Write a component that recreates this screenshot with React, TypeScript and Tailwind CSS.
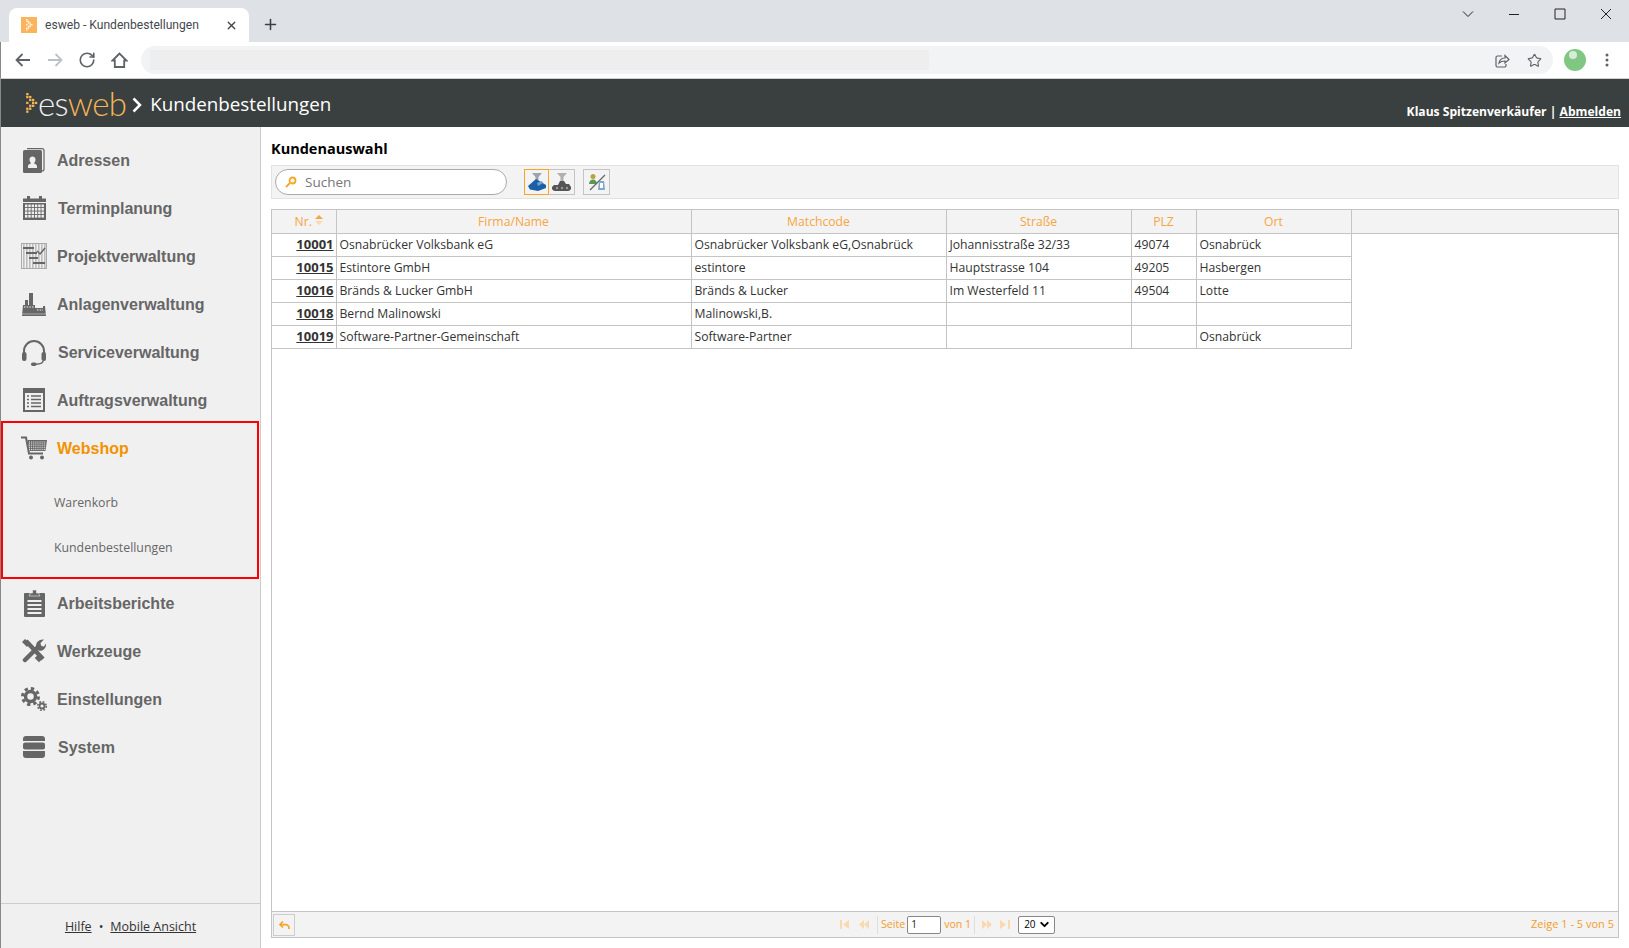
import { RotateCw, Star, X, Plus, ChevronDown } from "lucide-react";
import type { ReactNode } from "react";

const G = "#666666";

function AdressenIcon() {
  return (
    <svg width="22" height="25" viewBox="0 0 22 25">
      <path d="M4 .7H19a2 2 0 0 1 2 2V21a2 2 0 0 1-2 2" fill="none" stroke={G} strokeWidth="1.2" />
      <rect x="0" y="2" width="19" height="23" rx="1.5" fill={G} />
      <path d="M5 20v-2c0-1.5 2.5-2 3-3-1-1-1.5-2-1.5-3.5C6.5 9.5 8 8.5 9.5 8.5s3 1 3 3c0 1.5-.5 2.5-1.5 3.5.5 1 3 1.5 3 3v2z" fill="#f0f0f0" />
    </svg>
  );
}

function CalendarIcon() {
  const cells = [];
  for (let r = 0; r < 4; r++) for (let c = 0; c < 6; c++) cells.push(<rect key={r + "-" + c} x={2 + c * 3.3} y={8.5 + r * 3.5} width="2.4" height="2.6" fill="#f0f0f0" />);
  return (
    <svg width="23" height="24" viewBox="0 0 23 24">
      <rect x="0" y="2.5" width="23" height="21.5" fill={G} />
      <rect x="4" y="0" width="3" height="4" fill={G} />
      <rect x="16" y="0" width="3" height="4" fill={G} />
      <rect x="0" y="6" width="23" height="1" fill="#f0f0f0" />
      {cells}
    </svg>
  );
}

function ProjektIcon() {
  const stripes = [];
  for (let i = 0; i < 8; i++) stripes.push(<rect key={i} x={2 + i * 3} y="1" width="1.6" height="24" fill="#bdbdbd" />);
  return (
    <svg width="26" height="26" viewBox="0 0 26 26">
      <rect x=".5" y=".5" width="25" height="25" fill="#f0f0f0" stroke="#aaaaaa" />
      {stripes}
      <rect x="2" y="4" width="11" height="2" fill={G} />
      <rect x="5" y="9" width="11" height="2" fill={G} />
      <rect x="8" y="14" width="9" height="2" fill={G} />
      <rect x="12" y="19" width="12" height="2" fill={G} />
      <path d="M16 8l3 3 5-6" fill="none" stroke={G} strokeWidth="1.5" />
    </svg>
  );
}

function AnlagenIcon() {
  return (
    <svg width="24" height="23" viewBox="0 0 24 23">
      <path d="M0 23l1-11h2V7h3v5h1V0h4v12h2v3h8v-2h2l1 10z" fill={G} />
      <path d="M2 14h10M15 17h6" stroke="#f0f0f0" strokeWidth="1" strokeDasharray="1.5 1.2" />
      <rect x="0" y="20.5" width="24" height="1" fill="#f0f0f0" opacity=".5" />
    </svg>
  );
}

function HeadsetIcon() {
  return (
    <svg width="24" height="27" viewBox="0 0 24 27">
      <path d="M2 16V12a10 10 0 0 1 20 0v4" fill="none" stroke={G} strokeWidth="2" />
      <rect x="0" y="13" width="4.5" height="9" rx="2" fill={G} />
      <rect x="19.5" y="13" width="4.5" height="9" rx="2" fill={G} />
      <path d="M21 22c0 2.5-3 3-7 3.2" fill="none" stroke={G} strokeWidth="1.5" />
      <rect x="9" y="23.5" width="5.5" height="3.5" rx="1.7" fill={G} />
    </svg>
  );
}

function AuftragIcon() {
  return (
    <svg width="22" height="24" viewBox="0 0 22 24">
      <rect x="0" y="0" width="22" height="24" fill={G} />
      <rect x="2" y="5" width="18" height="17" fill="#f0f0f0" />
      <path d="M4 8h2M8 8h10M4 11.5h2M8 11.5h10M4 15h2M8 15h10M4 18.5h2M8 18.5h10" stroke={G} strokeWidth="1.6" />
    </svg>
  );
}

function CartIcon() {
  const grid = [];
  for (let r = 0; r < 5; r++) for (let c = 0; c < 9; c++) grid.push(<rect key={r + "-" + c} x={8 + c * 1.9} y={5.5 + r * 1.9} width="1" height="1" fill="#f0f0f0" />);
  return (
    <svg width="26" height="24" viewBox="0 0 26 24">
      <path d="M0 1.5h5l3 16h14" fill="none" stroke={G} strokeWidth="2" />
      <path d="M6.5 4H26l-1.5 11H8.5z" fill={G} />
      {grid}
      <circle cx="10" cy="21.5" r="2" fill={G} />
      <circle cx="21" cy="21.5" r="2" fill={G} />
    </svg>
  );
}

function ClipboardIcon() {
  return (
    <svg width="21" height="27" viewBox="0 0 21 27">
      <rect x="0" y="3" width="21" height="24" rx="1" fill={G} />
      <path d="M6 4V3h2.5V0h4v3H15v1.5l1 1.5H5z" fill={G} stroke="#f0f0f0" strokeWidth=".6" />
      <path d="M3.5 11h14M3.5 15h14M3.5 19h14M3.5 23h14" stroke="#f0f0f0" strokeWidth="1.8" />
    </svg>
  );
}

function ToolsIcon() {
  return (
    <svg width="24" height="25" viewBox="0 0 24 25">
      <path d="M4 2l17 18" stroke={G} strokeWidth="4.5" />
      <path d="M0 3l3-3 5 4-3 4z" fill={G} />
      <path d="M3 21L17 7" stroke={G} strokeWidth="4.5" strokeLinecap="round" />
      <path d="M14 8c-.5-4 2.5-8 8-7.5l-3.5 3.5.5 3 3 .5L24 4.5c.5 5-3.5 8-7.5 7z" fill={G} />
      <rect x="14" y="16" width="6" height="6" transform="rotate(45 17 19)" fill={G} />
    </svg>
  );
}

function GearsIcon() {
  return (
    <svg width="26" height="24" viewBox="0 0 26 24">
      <circle cx="9.5" cy="9.5" r="5" fill="none" stroke={G} strokeWidth="3.5" />
      <circle cx="9.5" cy="9.5" r="8" fill="none" stroke={G} strokeWidth="3" strokeDasharray="3.3 3" />
      <circle cx="21" cy="19" r="2.5" fill="none" stroke={G} strokeWidth="1.8" />
      <circle cx="21" cy="19" r="4.3" fill="none" stroke={G} strokeWidth="1.5" strokeDasharray="1.8 1.6" />
    </svg>
  );
}

function SystemIcon() {
  return (
    <svg width="22" height="22" viewBox="0 0 22 22">
      <path d="M3 0h16a3 3 0 0 1 3 3v2H0V3a3 3 0 0 1 3-3z" fill={G} />
      <rect x="0" y="6.5" width="22" height="7" rx="2" fill={G} />
      <path d="M0 15h22v4a3 3 0 0 1-3 3H3a3 3 0 0 1-3-3z" fill={G} />
    </svg>
  );
}

function DotsLogo({ color, size }: { color: string; size: number }) {
  const cells = [[0, 0], [3, 3], [0, 3], [6, 6], [3, 6], [9, 9], [6, 9], [0, 9], [6, 12], [3, 12], [3, 15], [0, 15], [0, 18]];
  return (
    <svg width={size} height={size * 1.7} viewBox="0 0 12 21">
      {cells.map(([x, y], i) => <rect key={i} x={x} y={y} width="2.4" height="2.4" fill={color} />)}
    </svg>
  );
}

const navTop = [
  { label: "Adressen", icon: <AdressenIcon />, text: "ml-[9px]" },
  { label: "Terminplanung", icon: <CalendarIcon />, text: "ml-[10px]" },
  { label: "Projektverwaltung", icon: <ProjektIcon />, text: "ml-[9px]" },
  { label: "Anlagenverwaltung", icon: <AnlagenIcon />, text: "ml-[9px]" },
  { label: "Serviceverwaltung", icon: <HeadsetIcon />, text: "ml-[10px]" },
  { label: "Auftragsverwaltung", icon: <AuftragIcon />, text: "ml-[9px]" },
];

const navBottom = [
  { label: "Arbeitsberichte", icon: <ClipboardIcon />, text: "ml-[9px]" },
  { label: "Werkzeuge", icon: <ToolsIcon />, text: "ml-[9px]" },
  { label: "Einstellungen", icon: <GearsIcon />, text: "ml-[9px]" },
  { label: "System", icon: <SystemIcon />, text: "ml-[10px]" },
];

function NavItem({ label, icon, text }: { label: string; icon: ReactNode; text: string }) {
  return (
    <div className="flex h-[48px] items-center pl-[19px]">
      <div className="flex w-[28px] justify-center">{icon}</div>
      <span className={text + " pt-[2px] font-['Liberation_Sans',sans-serif] text-[16px] font-bold text-[#666666]"}>{label}</span>
    </div>
  );
}

const rows = [
  ["10001", "Osnabrücker Volksbank eG", "Osnabrücker Volksbank eG,Osnabrück", "Johannisstraße 32/33", "49074", "Osnabrück"],
  ["10015", "Estintore GmbH", "estintore", "Hauptstrasse 104", "49205", "Hasbergen"],
  ["10016", "Bränds & Lucker GmbH", "Bränds & Lucker", "Im Westerfeld 11", "49504", "Lotte"],
  ["10018", "Bernd Malinowski", "Malinowski,B.", "", "", ""],
  ["10019", "Software-Partner-Gemeinschaft", "Software-Partner", "", "", "Osnabrück"],
];

const headers = ["Firma/Name", "Matchcode", "Straße", "PLZ", "Ort"];

function FunnelBlueIcon() {
  return (
    <svg width="20" height="20" viewBox="0 0 20 20">
      <path d="M5 1h10l-3.5 4v4h-3V5z" fill="#9aa5ad" />
      <path d="M1 14l8-7 10 6v3l-8 3-8-1.5z" fill="#1b5fa6" />
      <path d="M10 11l5-2 1 2-5 3z" fill="#6fa3d6" />
    </svg>
  );
}

function FunnelGreyIcon() {
  return (
    <svg width="20" height="20" viewBox="0 0 20 20">
      <path d="M5 1h10l-3.5 4v5h-3V5z" fill="#b0b0b0" />
      <path d="M8 9h4l2 3h3l2 3v2q-1 2-3 2H3q-2 0-3-2v-2l2-2h4z" fill="#555555" />
      <circle cx="5" cy="16" r="1.2" fill="#999999" />
      <circle cx="10" cy="16" r="1.2" fill="#999999" />
      <circle cx="15" cy="16" r="1.2" fill="#999999" />
    </svg>
  );
}

function PagerIcon({ d }: { d: string }) {
  return (
    <svg width="10" height="9" viewBox="0 0 10 9" className="shrink-0">
      <path d={d} fill="#fad9ae" />
    </svg>
  );
}

function WinIcon({ d }: { d: string }) {
  return (
    <div className="flex h-[28px] w-[46px] items-center justify-center">
      <svg width="12" height="12" viewBox="0 0 12 12" fill="none" stroke="#222222" strokeWidth="1">
        <path d={d} />
      </svg>
    </div>
  );
}

function NavBtn({ children }: { children: ReactNode }) {
  return <div className="flex w-[32px] items-center justify-center">{children}</div>;
}

export default function App() {
  return (
    <div className="flex h-[948px] w-[1629px] flex-col overflow-hidden bg-white font-['Open_Sans',sans-serif]">
      {/* Browser tab strip */}
      <div className="flex h-[42px] shrink-0 items-end bg-[#dee1e6] pl-[9px]">
        <div className="flex h-[34px] w-[240px] items-center rounded-t-[8px] bg-white pl-[12px]">
          <div className="flex h-[16px] w-[16px] items-center justify-center bg-[#fbb45c]">
            <DotsLogo color="#ffffff" size={7} />
          </div>
          <span className="ml-[8px] font-['Roboto',sans-serif] text-[12.1px] text-[#45484d]">esweb - Kundenbestellungen</span>
          <X className="ml-auto mr-[11px] text-[#45484d]" size={13} strokeWidth={2.5} />
        </div>
        <Plus className="mb-[9px] ml-[13px] text-[#3c4043]" size={17} strokeWidth={2.2} />
        <div className="ml-auto flex h-[42px] items-start">
          <WinIcon d="M1 3.5l5 5 5-5" />
          <WinIcon d="M1 6.5h10" />
          <WinIcon d="M1 1h10v10H1z" />
          <WinIcon d="M1 1l10 10M11 1L1 11" />
        </div>
      </div>

      {/* Browser toolbar */}
      <div className="flex h-[37px] shrink-0 items-center border-b border-l border-b-[#cfcfcf] border-l-[#888888] pl-[6px]">
        <NavBtn>
          <svg width="16" height="14" viewBox="0 0 16 14" fill="none" stroke="#5f6368" strokeWidth="1.8">
            <path d="M15 7H2M7.5 1L1.5 7l6 6" />
          </svg>
        </NavBtn>
        <NavBtn>
          <svg width="16" height="14" viewBox="0 0 16 14" fill="none" stroke="#bdc1c6" strokeWidth="1.8">
            <path d="M1 7h13M8.5 1l6 6-6 6" />
          </svg>
        </NavBtn>
        <NavBtn>
          <RotateCw className="text-[#5f6368]" size={18} strokeWidth={2.2} />
        </NavBtn>
        <NavBtn>
          <svg width="17" height="16" viewBox="0 0 17 16" fill="none" stroke="#5f6368" strokeWidth="1.8">
            <path d="M8.5 1.5L1.5 8.5h2.3v6.5h9.4V8.5h2.3z" />
          </svg>
        </NavBtn>
        <div className="ml-[6px] flex h-[28px] w-[1412px] items-center rounded-full bg-[#f1f3f4] pl-[9px] pr-[11px]">
          <div className="h-[20px] w-[779px] bg-[#eeeeee]" />
          <svg className="ml-auto" width="15" height="15" viewBox="0 0 15 15" fill="none" stroke="#5f6368" strokeWidth="1.2">
            <path d="M7 3H2.5A1.5 1.5 0 0 0 1 4.5v8A1.5 1.5 0 0 0 2.5 14h7a1.5 1.5 0 0 0 1.5-1.5V11" />
            <path d="M4 10c.5-3 3-5 6-5V2.5l4 4-4 3.5V8c-2.5 0-4.5 .5-6 2z" />
          </svg>
          <Star className="ml-[17px] text-[#5f6368]" size={15} strokeWidth={1.8} />
        </div>
        <div className="relative ml-[11px] h-[22px] w-[22px] rounded-full bg-[#81c784]">
          <div className="absolute left-[5px] top-[2px] h-[8px] w-[8px] rounded-full bg-[#d6ecd7]" />
        </div>
        <svg className="ml-[19px]" width="4" height="14" viewBox="0 0 4 14" fill="#5f6368">
          <circle cx="2" cy="2" r="1.5" />
          <circle cx="2" cy="7" r="1.5" />
          <circle cx="2" cy="12" r="1.5" />
        </svg>
      </div>

      {/* App header */}
      <div className="flex h-[48px] shrink-0 border-l border-l-[#888888] bg-[#3a3f40] pl-[25px] pr-[8px]">
        <div className="flex items-center">
          <DotsLogo color="#f5b455" size={12} />
          <span className="font-['Lato',sans-serif] text-[33px] font-light leading-none tracking-[-0.7px] text-[#f0f0f0]">es</span>
          <span className="font-['Lato',sans-serif] text-[33px] font-light leading-none tracking-[-0.7px] text-[#f5b455]">web</span>
          <svg className="ml-[6px] mt-[3px]" width="10" height="16" viewBox="0 0 10 16" fill="none" stroke="#ffffff" strokeWidth="2.5">
            <path d="M1.5 1.5L8 8l-6.5 6.500" />
          </svg>
          <span className="ml-[8px] mt-[2px] text-[18.8px] text-white">Kundenbestellungen</span>
        </div>
        <div className="ml-auto mt-[24px] text-[12.1px] font-bold text-white">
          Klaus Spitzenverkäufer | <span className="underline">Abmelden</span>
        </div>
      </div>

      <div className="flex min-h-0 flex-1">
        {/* Sidebar */}
        <aside className="flex w-[261px] shrink-0 flex-col border-l border-r border-l-[#888888] border-r-[#cccccc] bg-[#f0f0f0] pt-[9px]">
          {navTop.map(item => <NavItem key={item.label} {...item} />)}
          <div className="-mt-[3px] h-[158px] w-[258px] border-2 border-[#ff0000]">
            <div className="flex h-[50px] items-center pl-[17px]">
              <div className="flex w-[28px] justify-center"><CartIcon /></div>
              <span className="ml-[9px] pt-[2px] font-['Liberation_Sans',sans-serif] text-[16px] font-bold text-[#f39200]">Webshop</span>
            </div>
            <div className="mt-[9px] flex h-[43px] items-center pl-[51px] text-[12.3px] text-[#666666]">Warenkorb</div>
            <div className="mt-[2px] flex h-[43px] items-center pl-[51px] text-[12.3px] text-[#666666]">Kundenbestellungen</div>
          </div>
          {navBottom.map(item => <NavItem key={item.label} {...item} />)}
          <div className="mt-auto flex h-[45px] items-center justify-center gap-[7px] border-t border-[#cccccc] pt-[3px] text-[12.5px] text-[#333333]">
            <span className="underline">Hilfe</span>
            <span>•</span>
            <span className="underline">Mobile Ansicht</span>
          </div>
        </aside>

        {/* Main */}
        <main className="flex min-w-0 flex-1 flex-col pb-[10px] pl-[10px] pr-[10px]">
          <h1 className="mt-[12px] text-[14.5px] font-bold leading-[20px] text-black">Kundenauswahl</h1>
          <div className="mt-[6px] flex h-[34px] shrink-0 items-center border border-[#e3e3e3] bg-[#f3f3f3] pl-[3px]">
            <div className="flex h-[26px] w-[232px] items-center rounded-full border border-[#aaaaaa] bg-white pl-[9px]">
              <svg width="12" height="12" viewBox="0 0 12 12" fill="none" stroke="#f5a623" strokeWidth="1.8">
                <circle cx="7.5" cy="4.5" r="3" />
                <path d="M5 7L1 11" />
              </svg>
              <span className="ml-[8px] text-[13.5px] text-[#777777]">Suchen</span>
            </div>
            <div className="ml-[17px] flex h-[26px] w-[25px] items-center justify-center border border-[#f5a623] bg-[#f3f3f3]">
              <FunnelBlueIcon />
            </div>
            <div className="flex h-[26px] w-[26px] items-center justify-center border border-l-0 border-[#c4c4c4]">
              <FunnelGreyIcon />
            </div>
            <div className="ml-[8px] flex h-[26px] w-[27px] items-center justify-center border border-[#c4c4c4]">
              <svg width="18" height="18" viewBox="0 0 18 18">
                <circle cx="5" cy="3.5" r="2.5" fill="#b9a14a" />
                <path d="M1 11c0-3 2-4.5 4-4.5S9 8 9 11z" fill="#5a9a4a" />
                <path d="M2 17L17 2" stroke="#666666" strokeWidth="1.2" />
                <path d="M11 8h5l1 9h-7z" fill="#7fa8cf" />
                <path d="M12 10h3v5h-3z" fill="#ffffff" />
              </svg>
            </div>
          </div>

          <div className="mt-[10px] flex min-h-0 flex-1 flex-col border border-[#c4c4c4]">
            <div className="min-h-0 flex-1">
              <table className="w-full table-fixed border-collapse text-[12.2px] text-[#333333]">
                <colgroup>
                  <col className="w-[64px]" />
                  <col className="w-[355px]" />
                  <col className="w-[255px]" />
                  <col className="w-[185px]" />
                  <col className="w-[65px]" />
                  <col className="w-[155px]" />
                  <col />
                </colgroup>
                <thead>
                  <tr className="h-[23px] bg-[#f3f3f3] text-[#f7a541]">
                    <th className="border-b border-r border-[#c4c4c4] p-0 pt-[2px] font-normal">
                      <span className="inline-flex items-center gap-[3px] pl-[10px]">
                        Nr.
                        <svg width="8" height="10" viewBox="0 0 8 10" className="-mt-[4px]">
                          <path d="M4 0l4 4H0z" fill="#f7a541" />
                          <path d="M4 10L0 6h8z" fill="#fad9ae" />
                        </svg>
                      </span>
                    </th>
                    {headers.map(h => <th key={h} className="border-b border-r border-[#c4c4c4] p-0 pt-[2px] font-normal">{h}</th>)}
                    <th className="border-b border-[#c4c4c4] p-0" />
                  </tr>
                </thead>
                <tbody>
                  {rows.map(r => (
                    <tr key={r[0]} className="h-[23px]">
                      <td className="border-b border-r border-[#c4c4c4] p-0 pr-[2px] text-right text-[13px] font-bold underline">{r[0]}</td>
                      {r.slice(1).map((c, i) => (
                        <td key={i} className="whitespace-nowrap border-b border-r border-[#c4c4c4] p-0 pl-[3px] pt-[2px]">{c}</td>
                      ))}
                      <td />
                    </tr>
                  ))}
                </tbody>
              </table>
            </div>

            {/* Pager */}
            <div className="flex h-[26px] shrink-0 items-center border-t border-[#c4c4c4] bg-[#f3f3f3] pl-[1px] text-[10.6px] text-[#f39c2c]">
              <div className="flex h-[22px] w-[22px] items-center justify-center border border-[#cccccc]">
                <svg width="13" height="12" viewBox="0 0 24 24" fill="none" stroke="#f5a623" strokeWidth="3.5">
                  <path d="M9 5L3 11l6 6" />
                  <path d="M3 11h11a7 7 0 0 1 7 7v2" />
                </svg>
              </div>
              <div className="ml-[545px] flex items-center">
                <PagerIcon d="M0 0h2v9H0zM9 0v9L3 4.5z" />
                <div className="ml-[9px]"><PagerIcon d="M5 0v9L0 4.5zM10 0v9L5 4.5z" /></div>
                <div className="ml-[8px] h-[18px] w-px bg-[#dddddd]" />
                <span className="ml-[3px]">Seite</span>
                <div className="ml-[2px] flex h-[18px] w-[34px] items-center rounded-[2px] border border-[#888888] bg-white pl-[3px] text-[10px] text-[#222222]">1</div>
                <span className="ml-[3px]">von 1</span>
                <div className="ml-[3px] h-[18px] w-px bg-[#dddddd]" />
                <div className="ml-[7px]"><PagerIcon d="M0 0l5 4.5L0 9zM5 0l5 4.5L5 9z" /></div>
                <div className="ml-[8px]"><PagerIcon d="M0 0l6 4.5L0 9zM8 0h2v9H8z" /></div>
                <div className="ml-[8px] flex h-[18px] w-[37px] items-center justify-between rounded-[2px] border border-[#888888] bg-white pl-[5px] pr-[3px] text-[10px] text-black">
                  20
                  <ChevronDown size={13} strokeWidth={3.5} />
                </div>
              </div>
              <span className="ml-auto mr-[4px] text-[11px]">Zeige 1 - 5 von 5</span>
            </div>
          </div>
        </main>
      </div>
    </div>
  );
}
